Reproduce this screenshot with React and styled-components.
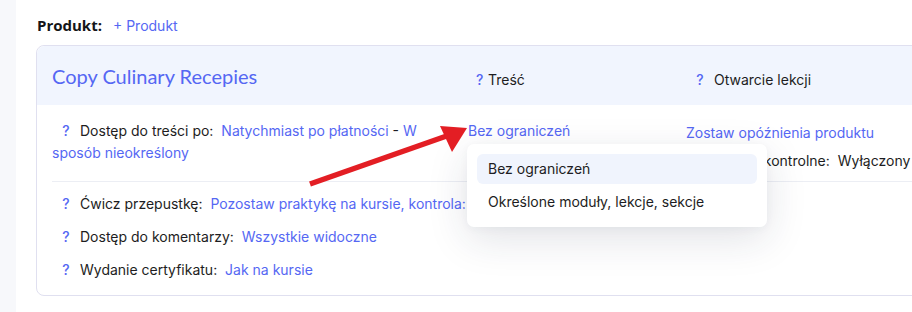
import React from "react";
import styled, { createGlobalStyle } from "styled-components";

const Global = createGlobalStyle`
  html, body { margin: 0; padding: 0; }
  body {
    background: #f7f8fb;
    font-family: Inter, "Noto Sans", sans-serif;
    font-size: 14px;
    color: #1d1d22;
    overflow: hidden;
  }
`;

const BLUE = "#5567f3";

const Page = styled.div`
  position: relative;
  width: 912px;
  height: 312px;
  overflow: hidden;
`;

const Panel = styled.div`
  margin-left: 16px;
  height: 312px;
  background: #ffffff;
  padding: 13px 0 0 20px;
  box-sizing: border-box;
`;

const ProductBar = styled.div`
  display: flex;
  align-items: center;
  gap: 11px;
  height: 23px;
  margin-left: 1px;
  margin-bottom: 9px;
`;

const BarLabel = styled.span`
  font-family: "Open Sans", sans-serif;
  font-weight: 700;
  font-size: 15px;
  color: #151518;
`;

const AddLink = styled.span`
  color: ${BLUE};
  font-size: 14px;
  padding-top: 2px;
`;

const Card = styled.div`
  width: 1000px;
  border: 1px solid #e0e0f0;
  border-radius: 8px;
`;

const Grid = styled.div`
  display: grid;
  grid-template-columns: 416px 218px 1fr;
  padding-left: 15px;
`;

const CardHeader = styled(Grid)`
  height: 59px;
  background: #f1f5fe;
  align-items: center;
  border-radius: 8px 8px 0 0;
`;

const Title = styled.div`
  font-family: Lato, sans-serif;
  font-size: 20px;
  color: ${BLUE};
  padding-top: 1px;
`;

const HeadCell = styled.div`
  display: flex;
  align-items: center;
  padding-top: 8px;
  padding-left: ${(p) => p.$indent}px;
`;

const Q = styled.span`
  display: inline-block;
  width: ${(p) => p.$w}px;
  text-align: ${(p) => (p.$w > 12 ? "center" : "left")};
  color: ${BLUE};
  font-weight: 500;
`;

const MainRow = styled(Grid)`
  padding-top: 15px;
  padding-bottom: 9px;
  line-height: 22px;
`;

const Cell = styled.div`
  padding-right: ${(p) => p.$pr || 0}px;
`;

const StackCell = styled.div`
  display: flex;
  flex-direction: column;
  gap: 6px;
  padding-top: 2px;
  white-space: nowrap;
`;

const Value = styled.span`
  color: ${(p) => (p.$plain ? "#1d1d22" : BLUE)};
  margin-left: 4px;
`;

const Plain = styled.span`
  color: #1d1d22;
`;

const Anchor = styled.div`
  position: relative;
  display: inline-block;
`;

const Link = styled.span`
  color: ${BLUE};
`;

const Dropdown = styled.div`
  position: absolute;
  top: calc(100% + 2px);
  left: -1px;
  width: 300px;
  box-sizing: border-box;
  padding: 10px;
  background: #ffffff;
  border-radius: 7px;
  box-shadow: 0 12px 40px rgba(30, 40, 70, 0.13), 0 2px 8px rgba(30, 40, 70, 0.04);
  display: flex;
  flex-direction: column;
  gap: 3px;
  z-index: 2;
`;

const Option = styled.div`
  height: 30px;
  display: flex;
  align-items: center;
  padding-left: 11px;
  border-radius: 6px;
  background: ${(p) => (p.$active ? "#f0f4fd" : "transparent")};
  color: #1d1d22;
  white-space: nowrap;
`;

const Divider = styled.div`
  height: 1px;
  background: #eceef4;
  margin-left: 15px;
`;

const Rows = styled.div`
  display: flex;
  flex-direction: column;
  gap: 11px;
  padding: 11px 0 14px 15px;
  line-height: 22px;
`;

const Row = styled.div`
  white-space: nowrap;
`;

const ArrowSvg = styled.svg`
  position: absolute;
  left: 0;
  top: 0;
  pointer-events: none;
  z-index: 3;
`;

function Setting({ label, value }) {
  return (
    <Row>
      <Q $w={28}>?</Q>
      {label}{" "}
      <Value>{value}</Value>
    </Row>
  );
}

export default function App() {
  return (
    <>
      <Global />
      <Page>
        <Panel>
          <ProductBar>
            <BarLabel>Produkt:</BarLabel>
            <AddLink>+ Produkt</AddLink>
          </ProductBar>
          <Card>
            <CardHeader>
              <Title>Copy Culinary Recepies</Title>
              <HeadCell $indent={8}>
                <Q $w={12}>?</Q>
                Treść
              </HeadCell>
              <HeadCell $indent={0}>
                <Q $w={28}>?</Q>
                Otwarcie lekcji
              </HeadCell>
            </CardHeader>
            <MainRow>
              <Cell $pr={14}>
                <Q $w={28}>?</Q>
                Dostęp do treści po:{" "}
                <Value>Natychmiast po płatności</Value>
                <Plain> - </Plain>
                <Link>W sposób nieokreślony</Link>
              </Cell>
              <Cell>
                <Anchor>
                  <Link>Bez ograniczeń</Link>
                  <Dropdown>
                    <Option $active>Bez ograniczeń</Option>
                    <Option>Określone moduły, lekcje, sekcje</Option>
                  </Dropdown>
                </Anchor>
              </Cell>
              <StackCell>
                <Link>Zostaw opóźnienia produktu</Link>
                <div>
                  <Q $w={28}>?</Q>
                  Punkty kontrolne:{" "}
                  <Value $plain>Wyłączony</Value>
                </div>
              </StackCell>
            </MainRow>
            <Divider />
            <Rows>
              <Setting label="Ćwicz przepustkę:" value="Pozostaw praktykę na kursie, kontrola: Zawsze" />
              <Setting label="Dostęp do komentarzy:" value="Wszystkie widoczne" />
              <Setting label="Wydanie certyfikatu:" value="Jak na kursie" />
            </Rows>
          </Card>
        </Panel>
        <ArrowSvg width="912" height="312" viewBox="0 0 912 312">
          <line x1="310" y1="184" x2="448" y2="135.5" stroke="#e31e24" strokeWidth="5.5" strokeLinecap="butt" />
          <polygon points="467,128 440,126 452,152" fill="#e31e24" />
        </ArrowSvg>
      </Page>
    </>
  );
}
